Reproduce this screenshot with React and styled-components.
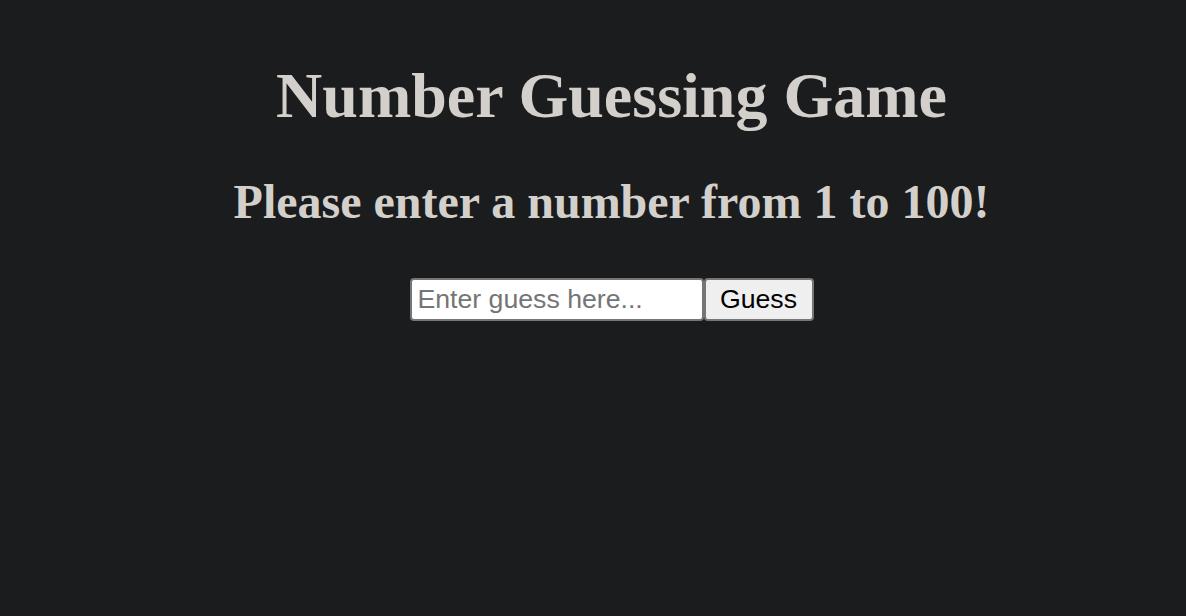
import React from "react";
import styled, { createGlobalStyle } from "styled-components";

const Global = createGlobalStyle`
  html, body { margin: 0; padding: 0; background: #1b1c1e; }
  body { font-family: "Liberation Serif", "Times New Roman", serif; }
`;

const Page = styled.main`
  min-height: 616px;
  box-sizing: border-box;
  padding: 16px 16px 16px 53px;
  display: flex;
  flex-direction: column;
  align-items: center;
  color: #d3d0cb;
  text-align: center;
`;

const Title = styled.h1`
  font-size: 64px;
  font-weight: bold;
  margin: 42.88px 0 41px;
`;

const Subtitle = styled.h2`
  font-size: 48px;
  font-weight: bold;
  margin: 0 0 49px;
`;

const Form = styled.form`
  display: flex;
  align-items: stretch;
`;

const Input = styled.input`
  box-sizing: border-box;
  width: 294px;
  height: 43px;
  padding: 2px 6px;
  font-family: "Liberation Sans", Arial, sans-serif;
  font-size: 26.67px;
  color: #000;
  background: #fff;
  border: 2px solid #767676;
  border-radius: 4px;
  outline: none;
  &::placeholder { color: #757575; }
`;

const Button = styled.button`
  box-sizing: border-box;
  width: 110px;
  height: 43px;
  padding: 2px 12px;
  font-family: "Liberation Sans", Arial, sans-serif;
  font-size: 26.67px;
  color: #000;
  background: #efefef;
  border: 2px solid #767676;
  border-radius: 4px;
`;

export default function App() {
  return (
    <>
      <Global />
      <Page>
        <Title>Number Guessing Game</Title>
        <Subtitle>Please enter a number from 1 to 100!</Subtitle>
        <Form onSubmit={(e) => e.preventDefault()}>
          <Input type="text" placeholder="Enter guess here..." />
          <Button type="submit">Guess</Button>
        </Form>
      </Page>
    </>
  );
}
